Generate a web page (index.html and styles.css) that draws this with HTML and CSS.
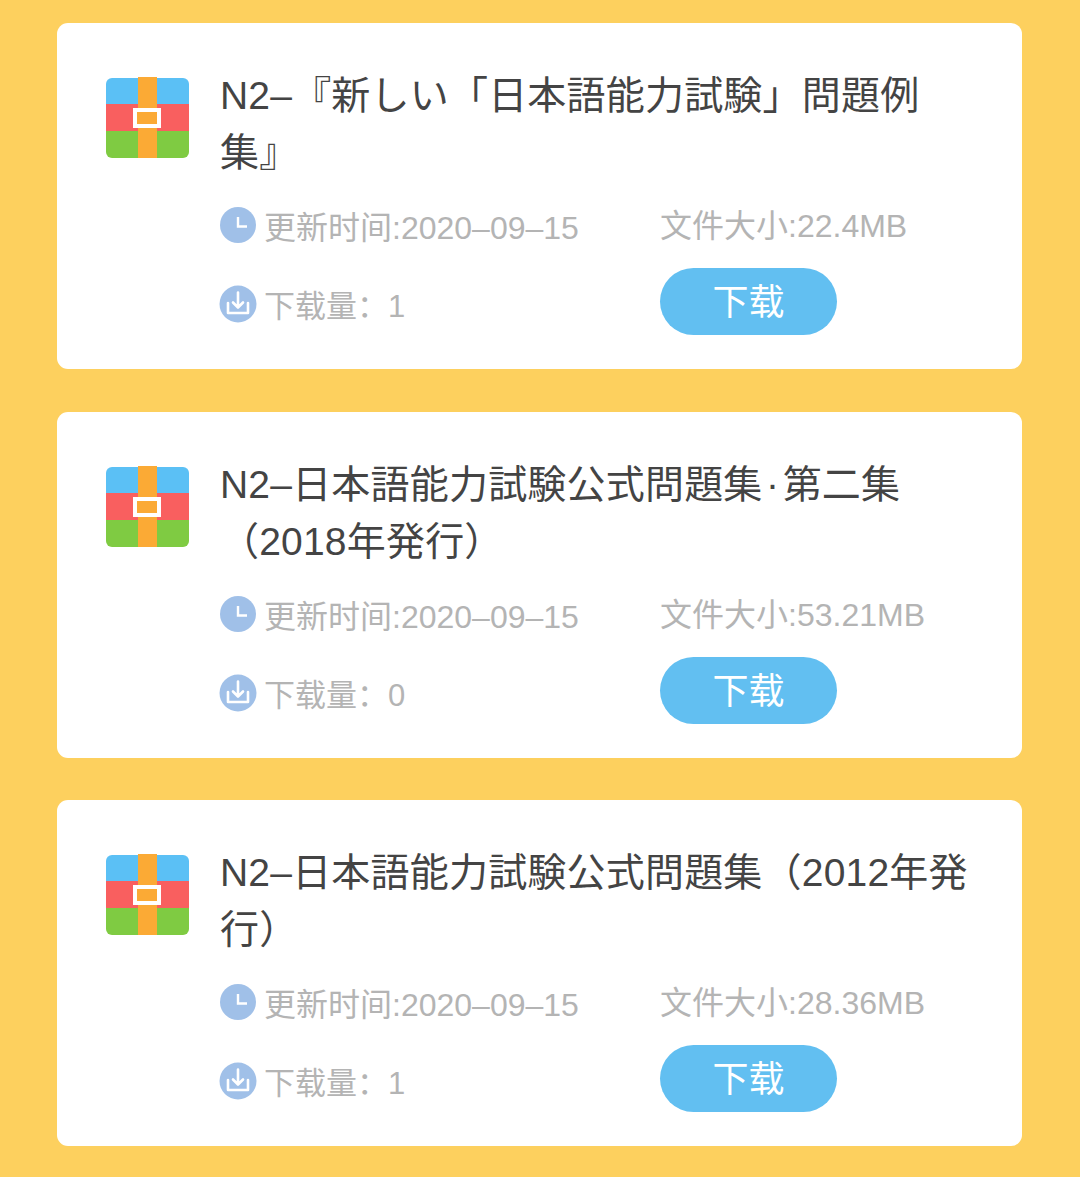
FILE: index.html
```html
<!DOCTYPE html>
<html lang="en">
<head>
    <meta charset="UTF-8">
    <meta name="viewport" content="width=device-width, initial-scale=1.0">
    <title>N2</title>
    <link rel="stylesheet" href="styles.css">
</head>
<body>
    <svg class="defs" width="0" height="0">
        <symbol id="zip" viewBox="0 0 83 81">
            <path fill="#5bc0f5" d="M0 28V7a6 6 0 0 1 6-6h71a6 6 0 0 1 6 6v21z"/>
            <rect fill="#f95f5f" y="27" width="83" height="27"/>
            <path fill="#7fcb42" d="M0 54h83v21a6 6 0 0 1-6 6H6a6 6 0 0 1-6-6z"/>
            <rect fill="#fbaa35" x="32" width="19" height="81"/>
            <rect fill="#fbaa35" stroke="#fff" stroke-width="4" x="29" y="33" width="24" height="16"/>
        </symbol>
        <symbol id="clock" viewBox="0 0 36 36">
            <circle fill="#a0c0e8" cx="18" cy="18" r="18"/>
            <path fill="none" stroke="#fff" stroke-width="2.4" d="M18 10v9.500h9"/>
        </symbol>
        <symbol id="down" viewBox="0 0 38 38">
            <circle fill="#a0c0e8" cx="19" cy="19" r="18.5"/>
            <path fill="none" stroke="#fff" stroke-width="2.6" stroke-linecap="round" stroke-linejoin="round" d="M19 7.500v14.500M14 17.500l5 5 5-5M9 18v10h20V18"/>
        </symbol>
    </svg>

    <div class="card">
        <svg class="zip"><use href="#zip"/></svg>
        <div class="info">
            <h2>N2–『新しい「日本語能力試験」問題例集』</h2>
            <div class="meta">
                <div class="line date"><svg class="clock"><use href="#clock"/></svg><span>更新时间:2020–09–15</span></div>
                <div class="size">文件大小:22.4MB</div>
                <div class="line count"><svg class="down"><use href="#down"/></svg><span>下载量：1</span></div>
                <button type="button">下载</button>
            </div>
        </div>
    </div>

    <div class="card">
        <svg class="zip"><use href="#zip"/></svg>
        <div class="info">
            <h2>N2–日本語能力試験公式問題集&#8202;·&#8202;第二集（2018年発行）</h2>
            <div class="meta">
                <div class="line date"><svg class="clock"><use href="#clock"/></svg><span>更新时间:2020–09–15</span></div>
                <div class="size">文件大小:53.21MB</div>
                <div class="line count"><svg class="down"><use href="#down"/></svg><span>下载量：0</span></div>
                <button type="button">下载</button>
            </div>
        </div>
    </div>

    <div class="card">
        <svg class="zip"><use href="#zip"/></svg>
        <div class="info">
            <h2>N2–日本語能力試験公式問題集（2012年発行）</h2>
            <div class="meta">
                <div class="line date"><svg class="clock"><use href="#clock"/></svg><span>更新时间:2020–09–15</span></div>
                <div class="size">文件大小:28.36MB</div>
                <div class="line count"><svg class="down"><use href="#down"/></svg><span>下载量：1</span></div>
                <button type="button">下载</button>
            </div>
        </div>
    </div>
</body>
</html>
```

FILE: styles.css
```css
html, body {
    height: 100%;
}
body {
    margin: 0;
    padding: 23px 58px 0 57px;
    box-sizing: border-box;
    background-color: #fdd05e;
    font-family: "Liberation Sans", "Noto Sans CJK JP", sans-serif;
    overflow: hidden;
}
.defs {
    display: block;
}
.card {
    display: flex;
    align-items: flex-start;
    height: 346px;
    margin-bottom: 42.5px;
    padding: 40px 0 0 49px;
    box-sizing: border-box;
    background: white;
    border-radius: 11px;
}
.zip {
    flex: none;
    width: 83px;
    height: 81px;
    margin-top: 14px;
}
.info {
    margin-left: 31px;
    width: 750px;
}
h2 {
    margin: 0;
    padding-top: 4px;
    height: 114px;
    font-size: 39px;
    font-weight: 400;
    line-height: 57px;
    letter-spacing: 0.2px;
    color: #444444;
    line-break: strict;
}
.meta {
    display: grid;
    grid-template-columns: 440px auto;
    grid-template-rows: 68px 85px;
    align-items: center;
    justify-items: start;
    margin-top: 10px;
    font-family: "Liberation Sans", "Noto Sans CJK SC", sans-serif;
    font-size: 32px;
    color: #b4b4b4;
}
.line {
    display: flex;
    align-items: center;
}
.line span {
    margin-left: 8px;
}
.count span {
    margin: 4px 0 0 7px;
    font-size: 31px;
}
.clock {
    width: 36px;
    height: 36px;
}
.down {
    width: 38px;
    height: 38px;
    margin: 5px 0 0 -1px;
}
.size {
    margin-top: -4px;
}
button {
    width: 177px;
    height: 67px;
    padding-bottom: 6px;
    background-color: #62bff1;
    color: white;
    border: none;
    border-radius: 34px;
    font-family: inherit;
    font-size: 36px;
    cursor: pointer;
}
```
